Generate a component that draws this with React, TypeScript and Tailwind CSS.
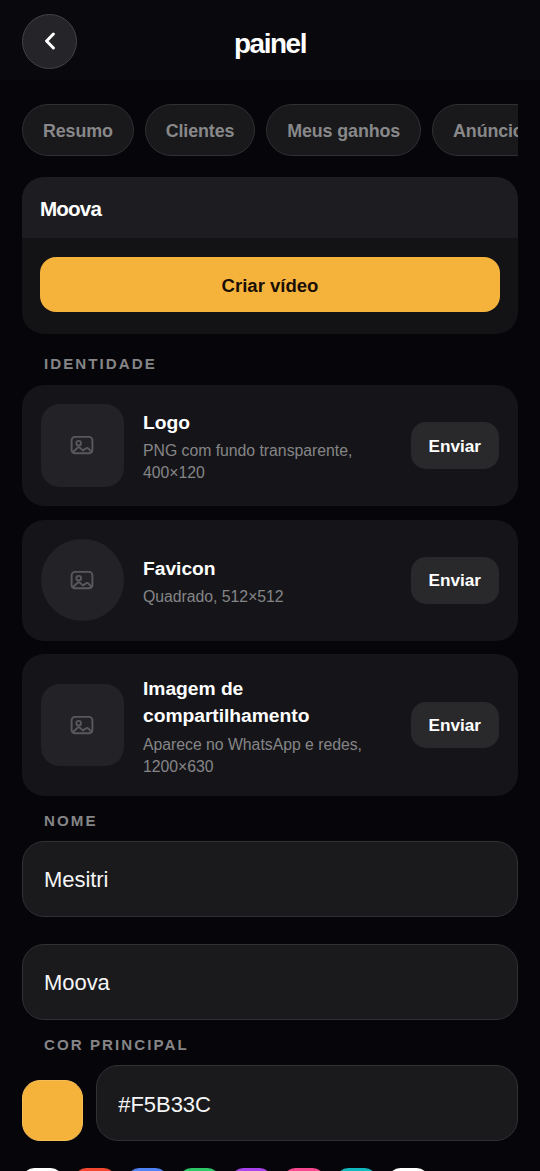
import { useState } from "react";
import clsx from "clsx";

const tabs = ["Resumo", "Clientes", "Meus ganhos", "Anúncios"];

const assets = [
  { id: "logo", title: "Logo", hint: "PNG com fundo transparente, 400×120", round: false },
  { id: "favicon", title: "Favicon", hint: "Quadrado, 512×512", round: true },
  { id: "share", title: "Imagem de compartilhamento", hint: "Aparece no WhatsApp e redes, 1200×630", round: false },
];

const swatches = [
  { id: "white", cls: "bg-white" },
  { id: "red", cls: "bg-[#f4472f]" },
  { id: "blue", cls: "bg-[#4f83f5]" },
  { id: "green", cls: "bg-[#2dc768]" },
  { id: "purple", cls: "bg-[#a843ee]" },
  { id: "pink", cls: "bg-[#f6478f]" },
  { id: "teal", cls: "bg-[#10b9bd]" },
  { id: "white-2", cls: "bg-white" },
];

function ImageIcon() {
  return (
    <svg className="mr-px" width="24" height="20" viewBox="0 0 24 20" fill="none" stroke="#59595c" strokeWidth="1.9" strokeLinecap="round" strokeLinejoin="round">
      <rect x="1.6" y="1.9" width="20.8" height="16.4" rx="3.4" />
      <circle cx="8.7" cy="8.2" r="2.3" />
      <path d="M2.8 17.2 7.3 13q1.4-1.3 2.9 0l2.9 2.6 2.6-2.2q1.3-1 2.6 0L21.6 17" />
    </svg>
  );
}

function Label({ children, className }: { children: string; className?: string }) {
  return (
    <h2 className={clsx("pl-[22px] text-[15.125px] leading-[20px] font-bold tracking-[2.05px] text-[#858587]", className)}>
      {children}
    </h2>
  );
}

function Field({ label, value, onChange }: { label: string; value: string; onChange: (v: string) => void }) {
  return (
    <input
      aria-label={label}
      value={value}
      onChange={(e) => onChange(e.target.value)}
      className="block h-[75.6px] w-full min-w-0 rounded-[22px] border border-[#313134] bg-[#1a1a1c] px-[21px] pt-[3px] text-[22px] tracking-[-0.05px] text-[#f5f5f7] outline-none"
    />
  );
}

export default function App() {
  const [name, setName] = useState("Mesitri");
  const [brand, setBrand] = useState("Moova");
  const [color, setColor] = useState("#F5B33C");

  return (
    <div className="h-[1171px] overflow-hidden bg-[#05050a] font-['Liberation_Sans',Arial,sans-serif] text-white">
      <header className="grid h-20 grid-cols-[55px_1fr_55px] items-start bg-[#08080d] px-[22px] pt-[13.75px]">
        <button type="button" aria-label="Voltar" className="grid h-[55px] w-[55px] place-items-center rounded-full border border-[#434347] bg-[#252529]">
          <svg width="12" height="18" viewBox="0 0 12 18" fill="none" stroke="#fff" strokeWidth="3" strokeLinecap="round" strokeLinejoin="round">
            <path d="M9.4 2 2.6 9l6.8 7" />
          </svg>
        </button>
        <h1 className="mt-[12px] text-center text-[27.9px] leading-[36px] font-bold tracking-[-1.4px]">painel</h1>
      </header>

      <main className="px-[22px] pt-6">
        <nav className="flex gap-[11px] overflow-hidden">
          {tabs.map((tab) => (
            <button
              key={tab}
              type="button"
              className="h-[51.5px] shrink-0 rounded-full border border-[#303033] bg-[#19191b] px-[20px] pt-[3px] text-[17.875px] font-bold tracking-[-0.12px] whitespace-nowrap text-[#88888a]"
            >
              {tab}
            </button>
          ))}
        </nav>

        <section className="mt-[21.5px] h-[156.5px] overflow-hidden rounded-[22px] bg-[#131316]">
          <div className="flex h-[61px] items-center bg-[#1d1d21] px-[17.9px] pt-[3px] text-[20.625px] font-bold tracking-[-0.8px]">
            Moova
          </div>
          <div className="px-[17.9px] pt-[19px]">
            <button type="button" className="h-[55px] w-full rounded-[16px] bg-[#f5b33c] pt-[3px] text-[18.56px] font-bold text-[#1a0f06]">
              Criar vídeo
            </button>
          </div>
        </section>

        <Label className="mt-[20.9px]">IDENTIDADE</Label>
        <div className="mt-[10.5px] flex flex-col gap-[13.75px]">
          {assets.map((a) => (
            <article key={a.id} className="flex items-center gap-[19.25px] rounded-[22px] bg-[#151519] p-[19.25px]">
              <div
                className={clsx(
                  "grid h-[82.5px] w-[82.5px] shrink-0 place-items-center bg-[#232327]",
                  a.round ? "rounded-full" : "rounded-[19px]",
                )}
              >
                <ImageIcon />
              </div>
              <div className="-mb-[1.5px] min-w-0 flex-1">
                <h3 className="pt-px text-[19.25px] leading-[27.5px] font-bold tracking-[-0.03px]">{a.title}</h3>
                <p className="mt-[4.2px] text-[15.81px] leading-[22.1px] tracking-[-0.02px] text-[#858587]">{a.hint}</p>
              </div>
              <button type="button" className="h-[46.75px] w-[88px] shrink-0 rounded-[15px] bg-[#29292b] pt-[2px] text-[17.19px] font-bold">
                Enviar
              </button>
            </article>
          ))}
        </div>

        <Label className="mt-[15px]">NOME</Label>
        <div className="mt-[10.3px] flex flex-col gap-[27.5px]">
          <Field label="Nome" value={name} onChange={setName} />
          <Field label="Marca" value={brand} onChange={setBrand} />
        </div>

        <Label className="mt-[15px]">COR PRINCIPAL</Label>
        <div className="mt-[10.5px] flex items-end gap-[13.75px]">
          <button type="button" aria-label="Escolher cor" className="h-[60.5px] w-[60.5px] shrink-0 rounded-[18px] border border-[#f7bd55] bg-[#f5b33c]" />
          <Field label="Cor principal" value={color} onChange={setColor} />
        </div>
        <div className="mt-[27.2px] flex gap-[11px]">
          {swatches.map((s) => (
            <button key={s.id} type="button" aria-label={s.id} className={clsx("h-[41.25px] w-[41.25px] rounded-[12.4px]", s.cls)} />
          ))}
        </div>
      </main>
    </div>
  );
}
